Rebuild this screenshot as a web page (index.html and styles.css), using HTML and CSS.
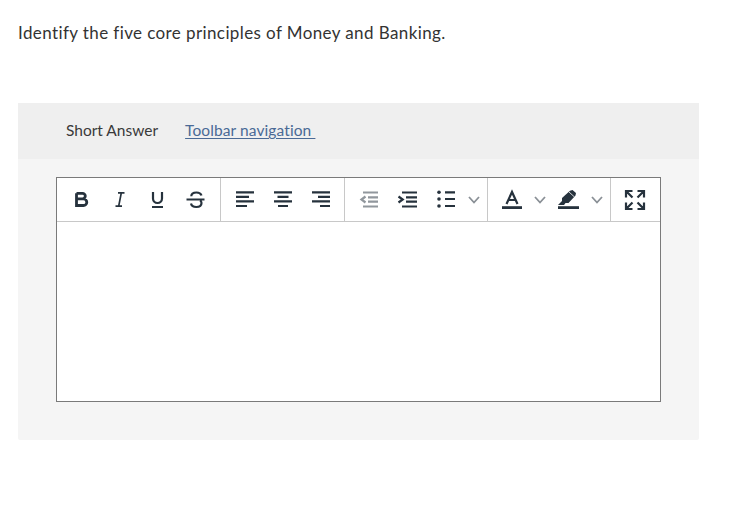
FILE: index.html
```html
<!DOCTYPE html>
<html lang="en">
<head>
<meta charset="utf-8">
<title>Short Answer</title>
<link rel="stylesheet" href="styles.css">
</head>
<body>
<p class="question">Identify the five core principles of Money and Banking.</p>
<section class="card">
  <header class="card-head">
    <span class="label">Short Answer</span>
    <a class="nav-link" href="#">Toolbar navigation&nbsp;</a>
  </header>
  <div class="card-body">
    <div class="editor">
      <div class="toolbar">
        <div class="group g1">
          <svg class="ic" viewBox="0 0 24 24"><path class="s3" d="M6.500 5.300h6a2.800 2.800 0 0 1 0 5.600H6.500M12.500 10.900h1a3.300 3.300 0 0 1 0 6.600H6.500V5.300"/></svg>
          <svg class="ic" viewBox="0 0 24 24"><path class="s15" d="M10 4.800h6.500M7.500 18.200h6.500M13.300 4.800l-2.600 13.400"/></svg>
          <svg class="ic" viewBox="0 0 24 24"><path class="s2" d="M7 4v6.500a4.500 4.500 0 0 0 9 0V4M6 19h11"/></svg>
          <svg class="ic" viewBox="0 0 24 24"><path class="s2" d="M2.500 11.500h18M17.500 7.500C16.800 5.500 14.800 4.500 12.500 4.500 9.500 4.500 7.300 6 7.300 8.300M7 15.500C7.500 17.700 9.800 19 12.300 19 15.500 19 17.500 17.300 17.500 15 17.500 14 17 13 16 12.500"/></svg>
        </div>
        <div class="group g2">
          <svg class="ic" viewBox="0 0 24 24"><path class="s2" d="M3 4.300h18M3 8.800h13M3 13.300h18M3 18h11"/></svg>
          <svg class="ic" viewBox="0 0 24 24"><path class="s2" d="M3 4.300h18M6.500 8.800h11M3 13.300h18M7 18h10"/></svg>
          <svg class="ic" viewBox="0 0 24 24"><path class="s2" d="M3 4.300h18M9 8.800h12M3 13.300h18M11 18h10"/></svg>
        </div>
        <div class="group g3">
          <svg class="ic faded" viewBox="0 0 24 24"><path class="s2" d="M6 4.500h15M11 9.300h10M11 13.700h10M6 18.500h15M8.500 8.500L4.500 11.500l4 3"/></svg>
          <svg class="ic" viewBox="0 0 24 24"><path class="s2" d="M7 4.500h15M11 9.300h11M11 13.700h11M7 18.500h15M3.500 8.500l4.200 3-4.200 3"/></svg>
          <svg class="ic" viewBox="0 0 24 24"><circle class="fill" cx="6" cy="4.300" r="1.800"/><circle class="fill" cx="6" cy="11" r="1.800"/><circle class="fill" cx="6" cy="18" r="1.800"/><path class="s2" d="M12 4.300h10M12 11h10M12 18h10"/></svg>
          <svg class="chev" viewBox="0 0 12 24"><path d="M1 9l5 5.500 5-5.500"/></svg>
        </div>
        <div class="group g4">
          <svg class="ic" viewBox="0 0 24 24"><path class="s2" d="M6.500 16L12 4l5.500 12M8.500 12h7"/><path class="s3" d="M2 19.600h20"/></svg>
          <svg class="chev" viewBox="0 0 12 24"><path d="M1 9l5 5.500 5-5.500"/></svg>
          <svg class="ic" viewBox="0 0 24 24"><path class="fill" d="M5 10L13 2.800 15.500 2 19 5 18.500 7.500 11.500 15H8.500L7 17H1L5 13z"/><path class="gap" d="M12 4l5.500 5"/><path class="s3" d="M1 19.600h21"/></svg>
          <svg class="chev" viewBox="0 0 12 24"><path d="M1 9l5 5.500 5-5.500"/></svg>
        </div>
        <div class="group g5">
          <svg class="ic" viewBox="0 0 24 24"><path class="s2" d="M3 9.500V3H9.500M3.500 3.500L9.500 9.500M21 9.500V3H14.500M20.500 3.500L14.500 9.500M3 14.500V21H9.500M3.500 20.500L9.500 14.500M21 14.500V21H14.500M20.500 20.500L14.500 14.500"/></svg>
        </div>
      </div>
      <div class="text-area"></div>
    </div>
  </div>
</section>
</body>
</html>
```
FILE: styles.css
```css
* { box-sizing: border-box; }
html, body { margin: 0; padding: 0; background: #fff; }
body {
  width: 738px;
  height: 515px;
  padding: 0 39px 0 18px;
  font-family: Lato, "Liberation Sans", sans-serif;
  color: #333;
  overflow: hidden;
}
.question {
  margin: 0;
  padding-top: 22px;
  height: 103px;
  font-size: 17px;
  line-height: 22px;
  letter-spacing: 0.4px;
}
.card { background: #f5f5f5; height: 337px; border-radius: 2px; }
.card-head {
  height: 56px;
  background: #efefef;
  display: flex;
  align-items: center;
  padding: 0 0 2px 48px;
  gap: 27px;
  font-size: 15.5px;
}
.label { color: #3a3a3a; }
.nav-link { color: #4a6a96; text-decoration: underline; text-underline-offset: 2px; letter-spacing: 0.1px; }
.card-body { padding: 18px 38px 0; }
.editor {
  height: 225px;
  border: 1px solid #7a7a7a;
  background: #fff;
  display: flex;
  flex-direction: column;
}
.toolbar {
  height: 44px;
  display: flex;
  border-bottom: 1px solid #c8c8c8;
}
.group {
  display: flex;
  align-items: flex-start;
  border-right: 1px solid #c8c8c8;
  padding-top: 10px;
  gap: 14px;
}
.g1 { width: 164px; padding-left: 13px; }
.g2 { width: 124px; padding-left: 12px; }
.g3 { width: 143px; padding-left: 12px; }
.g3 .chev { margin-left: -3px; }
.g4 { width: 123px; padding-left: 12px; gap: 10px; }
.g4 .chev + .ic { margin-left: 1px; }
.g5 { flex: 1; border-right: 0; padding-left: 12px; }
.text-area { flex: 1; }
.ic { width: 24px; height: 24px; flex: none; }
.ic path, .ic circle { stroke: #26323d; fill: none; }
.ic .s15 { stroke-width: 1.7; }
.ic .s2 { stroke-width: 2.2; }
.ic .s3 { stroke-width: 2.8; }
.ic .fill { fill: #26323d; stroke: none; }
.ic .gap { stroke: #fff; stroke-width: 0.8; }
.faded { opacity: 0.5; }
.chev { width: 12px; height: 24px; flex: none; }
.chev path { fill: none; stroke: #8a9096; stroke-width: 1.8; }
```
